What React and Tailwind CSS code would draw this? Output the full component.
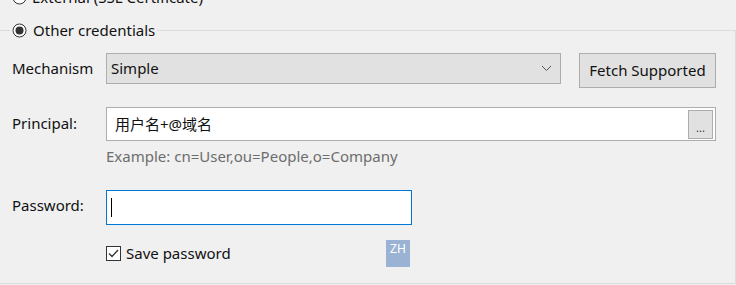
import React from "react";

function Radio({ checked }) {
  return (
    <svg width="15" height="15" viewBox="0 0 15 15" className="shrink-0">
      <circle cx="7.5" cy="7.5" r="6.5" fill="#ffffff" stroke="#333333" strokeWidth="1" />
      {checked && <circle cx="7.5" cy="7.5" r="4" fill="#333333" />}
    </svg>
  );
}

function Checkbox() {
  return (
    <svg width="15" height="15" viewBox="0 0 15 15" className="shrink-0">
      <rect x="0.5" y="0.5" width="14" height="14" fill="#ffffff" stroke="#333333" />
      <path d="M3 7.5 L6 10.5 L12 4" fill="none" stroke="#333333" strokeWidth="1.3" />
    </svg>
  );
}

export default function App() {
  return (
    <div
      className="w-[736px] h-[285px] overflow-hidden bg-[#f0f0f0] text-[15px] text-[#111111]"
      style={{ fontFamily: '"Noto Sans", "Noto Sans CJK SC", sans-serif' }}
    >
      <div className="flex items-center gap-[5px] h-5 -mt-[13px] ml-[12px]">
        <Radio checked={false} />
        <span className="leading-none">External (SSL Certificate)</span>
      </div>

      <div className="mt-[23px] w-[736px] h-[254px] border-t border-r border-b border-[#dcdcdc]">
        <div className="-mt-[11px] ml-[10px] h-5 w-fit px-[2px] flex items-center gap-[6px] bg-[#f0f0f0]">
          <Radio checked={true} />
          <span className="leading-none">Other credentials</span>
        </div>

        <div className="mt-[13px] flex items-start">
          <div className="w-[106px] pl-[12px] h-[31px] flex items-center pb-[1px]">Mechanism</div>
          <div className="w-[455px] h-[31px] bg-[#e1e1e1] border border-[#adadad] flex items-center justify-between pl-[4px] pr-[8px]">
            <span>Simple</span>
            <svg width="11" height="7" viewBox="0 0 11 7">
              <path d="M1 1 L5.5 5.5 L10 1" fill="none" stroke="#555555" strokeWidth="1" />
            </svg>
          </div>
          <div className="ml-[18px] w-[137px] h-[35px] bg-[#e1e1e1] border border-[#adadad] flex items-center justify-center">
            Fetch Supported
          </div>
        </div>

        <div className="mt-[19px] flex items-start">
          <div className="w-[106px] pl-[12px] h-[34px] flex items-center pb-[1px]">Principal:</div>
          <div className="w-[610px] h-[34px] bg-white border border-[#adadad] flex items-center justify-between pl-[8px] pr-[2px]">
            <span>用户名+@域名</span>
            <div className="w-[25px] h-[29px] bg-[#e1e1e1] border border-[#adadad] flex items-center justify-center text-[11px] text-[#333333] leading-none pt-[6px]">
              ...
            </div>
          </div>
        </div>

        <div className="mt-[5px] ml-[106px] text-[#6d6d6d] leading-[20px]">
          Example: cn=User,ou=People,o=Company
        </div>

        <div className="mt-[24px] flex items-center">
          <div className="w-[106px] pl-[12px] pb-[4px]">Password:</div>
          <div className="w-[306px] h-[35px] bg-white border border-[#0078d7] flex items-center pl-[4px]">
            <div className="w-px h-[19px] bg-black" />
          </div>
        </div>

        <div className="mt-[15px] ml-[106px] flex items-center">
          <div className="flex items-center gap-[5px] w-[280px]">
            <Checkbox />
            <span>Save password</span>
          </div>
          <div className="w-[24px] h-[27px] bg-[#9ab3d5] text-white text-[12px] flex items-start justify-center pt-[3px] leading-none">
            ZH
          </div>
        </div>
      </div>
    </div>
  );
}
